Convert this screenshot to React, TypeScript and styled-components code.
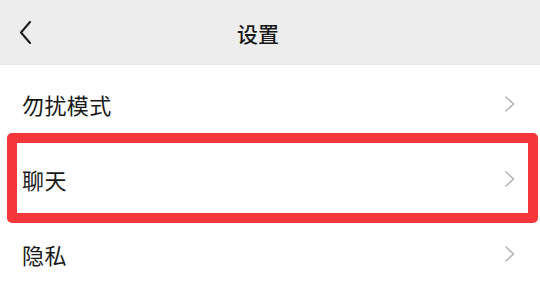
import styled, { createGlobalStyle } from "styled-components";

const GlobalStyle = createGlobalStyle`
	html, body {
		margin: 0;
		padding: 0;
		background: #ffffff;
	}

	body {
		font-family: "Noto Sans CJK SC", "Noto Sans", sans-serif;
		color: #1a1a1a;
	}
`;

const Page = styled.div`
	width: 540px;
	height: 289px;
	overflow: hidden;
	display: flex;
	flex-direction: column;
	background: #ffffff;
`;

const Header = styled.div`
	flex: 0 0 65px;
	display: grid;
	grid-template-columns: 60px 1fr 84px;
	align-items: center;
	background: #ededed;
	border-bottom: 1px solid #e6e6e6;
	box-sizing: border-box;
`;

const BackButton = styled.div`
	display: flex;
	align-items: center;
	padding-left: 19px;
	height: 100%;
`;

const Title = styled.div`
	text-align: center;
	font-size: 21px;
	font-weight: 500;
	color: #191919;
	padding-top: 1px;
`;

const List = styled.div`
	display: flex;
	flex-direction: column;
	padding-top: 1px;
`;

const Row = styled.div`
	position: relative;
	height: 75px;
	display: flex;
	align-items: center;
	justify-content: space-between;
	padding: 0 25px 0 22px;
`;

const Label = styled.span`
	font-size: 22px;
	color: #191919;
	letter-spacing: 0.4px;
`;

const Highlight = styled.div`
	position: absolute;
	top: -8px;
	bottom: -7px;
	left: 7px;
	right: 2px;
	border: 10.5px solid #f5363a;
	border-radius: 5px;
	pointer-events: none;
`;

function Chevron({ dir, color, size }: { dir: "left" | "right"; color: string; size: number; }) {
	const d = dir === "left" ? "M11 1 L2 11.5 L11 22" : "M1 1 L8.5 8 L1 15";
	const vb = dir === "left" ? "0 0 13 23" : "0 0 10 16";
	return (
		<svg width={dir === "left" ? 13 : 10} height={size} viewBox={vb} fill="none">
			<path d={d} stroke={color} strokeWidth={dir === "left" ? 2 : 1.6} strokeLinecap="round" strokeLinejoin="round" />
		</svg>
	);
}

const items = ["勿扰模式", "聊天", "隐私"];

export default function App() {
	return (
		<>
			<GlobalStyle />
			<Page>
				<Header>
					<BackButton>
						<Chevron dir="left" color="#1a1a1a" size={23} />
					</BackButton>
					<Title>设置</Title>
					<div />
				</Header>

				<List>
					{items.map(v => (
						<Row key={v}>
							<Label>{v}</Label>
							<Chevron dir="right" color="#b4b4b4" size={16} />
							{v === "聊天" ? <Highlight /> : null}
						</Row>
					))}
				</List>
			</Page>
		</>
	);
}
